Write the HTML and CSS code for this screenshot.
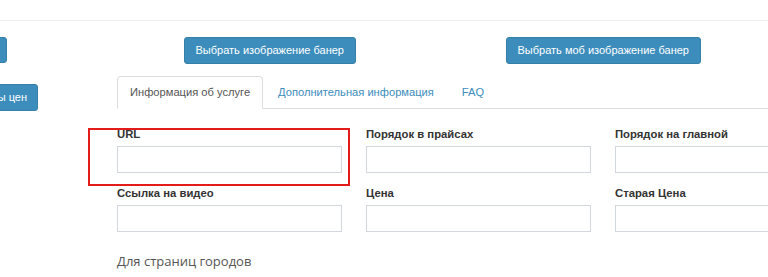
FILE: index.html
```html
<!DOCTYPE html>
<html lang="ru">
  <head>
    <meta charset="UTF-8" />
    <meta name="viewport" content="width=device-width, initial-scale=1.0" />
    <title>Услуга</title>
    <link rel="stylesheet" href="styles.css">
  </head>
  <body>
    <div class="topbar"></div>

    <div class="page">
      <aside class="sidebar">
        <button class="btn btn-first">Назад</button>
        <button class="btn btn-second">Таблицы цен</button>
      </aside>

      <main class="content">
        <div class="banner-row">
          <div class="banner-col">
            <button class="btn">Выбрать изображение банер</button>
          </div>
          <div class="banner-col">
            <button class="btn">Выбрать моб изображение банер</button>
          </div>
        </div>

        <ul class="tabs">
          <li class="active"><a href="#">Информация об услуге</a></li>
          <li><a href="#">Дополнительная информация</a></li>
          <li><a href="#">FAQ</a></li>
        </ul>

        <div class="tab-body">
          <!-- выделенное поле -->
          <div class="highlight"></div>

          <div class="form-grid">
            <div class="field">
              <label>URL</label>
              <input type="text" />
            </div>
            <div class="field">
              <label>Порядок в прайсах</label>
              <input type="text" />
            </div>
            <div class="field">
              <label>Порядок на главной</label>
              <input type="text" />
            </div>
            <div class="field">
              <label>Ссылка на видео</label>
              <input type="text" />
            </div>
            <div class="field">
              <label>Цена</label>
              <input type="text" />
            </div>
            <div class="field">
              <label>Старая Цена</label>
              <input type="text" />
            </div>
          </div>

          <h4 class="section-title">Для страниц городов</h4>
        </div>
      </main>
    </div>
  </body>
</html>
```

FILE: styles.css
```css
* {
  margin: 0;
  padding: 0;
  box-sizing: border-box;
}

body {
  font-family: "Liberation Sans", Arial, sans-serif;
  font-size: 11.3px;
  line-height: 17px;
  color: #333;
  background-color: #fff;
  overflow: hidden;
  width: 768px;
  height: 277px;
}

.topbar {
  height: 21px;
  border-bottom: 1px solid #eef0f2;
}

.page {
  display: flex;
  align-items: flex-start;
}

.btn {
  display: inline-block;
  background-color: #3c8dbc;
  border: 1px solid #367fa9;
  border-radius: 3px;
  color: #fff;
  font-family: "Liberation Sans", Arial, sans-serif;
  font-size: 11px;
  line-height: 17px;
  padding: 4px 11px;
  white-space: nowrap;
  cursor: pointer;
}

.sidebar {
  width: 38px;
  flex: none;
  overflow: hidden;
  display: flex;
  flex-direction: column;
  align-items: flex-end;
  padding-top: 16px;
}

.btn-first {
  margin-right: 31px;
  height: 26px;
}

.btn-second {
  margin-top: 21px;
  height: 27px;
  padding: 4px 10px;
}

.content {
  flex: none;
  width: 667px;
  margin-left: 65px;
  padding: 16px 14px 0;
  position: relative;
}

.banner-row {
  display: grid;
  grid-template-columns: 1fr 1fr;
  margin: 0 -14px;
}

.banner-col {
  display: flex;
  justify-content: center;
}

.banner-col .btn {
  height: 27px;
}

.tabs {
  list-style: none;
  display: flex;
  margin-top: 12px;
  border-bottom: 1px solid #ddd;
  margin-right: -200px;
  font-size: 11.15px;
}

.tabs li {
  margin-bottom: -1px;
}

.tabs li a {
  display: block;
  padding: 7px 12px;
  border: 1px solid transparent;
  border-radius: 4px 4px 0 0;
  color: #3c8dbc;
  text-decoration: none;
  margin-right: 2px;
}

.tabs li.active a {
  color: #555;
  background-color: #fff;
  border-color: #ddd #ddd transparent;
}

.tab-body {
  position: relative;
  padding-top: 17px;
}

.highlight {
  position: absolute;
  left: -29px;
  top: 19px;
  width: 262px;
  height: 58px;
  border: 2px solid #e41b1b;
}

.form-grid {
  display: grid;
  grid-template-columns: 225px 225px 225px;
  column-gap: 24px;
  row-gap: 12px;
}

.field label {
  display: block;
  font-weight: bold;
  margin-bottom: 3px;
}

.field input {
  display: block;
  width: 100%;
  height: 27px;
  border: 1px solid #d2d6de;
  background-color: #fff;
}

.section-title {
  margin-top: 19px;
  font-family: "Open Sans", sans-serif;
  font-weight: normal;
  font-size: 13px;
  line-height: 20px;
  color: #555;
}
```
